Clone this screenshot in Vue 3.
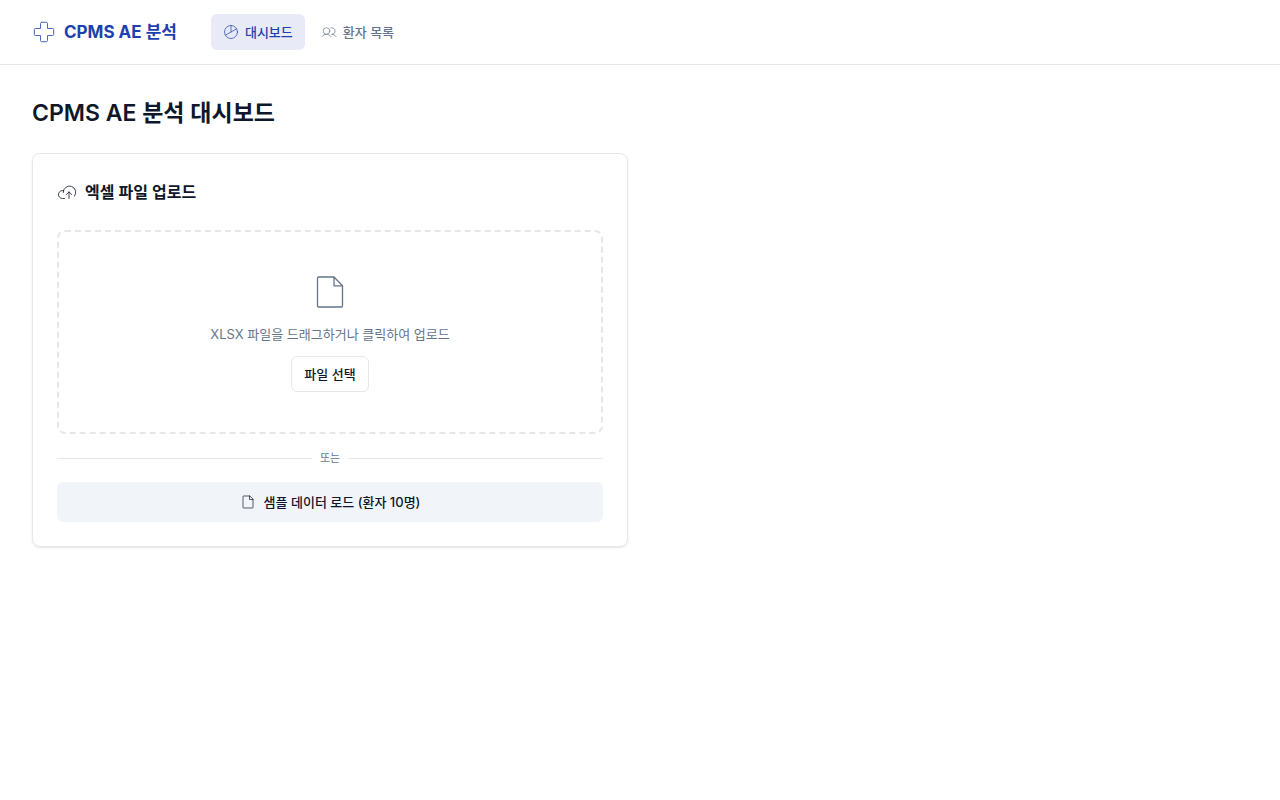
<script setup>
const nav = [
  { label: '대시보드', icon: 'chart', active: true },
  { label: '환자 목록', icon: 'users', active: false },
]
</script>

<template>
  <div class="page">
    <header class="topbar">
      <a class="brand" href="#">
        <svg class="brand-icon" viewBox="0 0 24 24" aria-hidden="true">
          <path d="M9.700 2.300h4.600a1.200 1.200 0 0 1 1.200 1.200v5h5a1.200 1.200 0 0 1 1.200 1.200v4.600a1.200 1.200 0 0 1-1.200 1.200h-5v5a1.200 1.200 0 0 1-1.200 1.200H9.700a1.200 1.200 0 0 1-1.200-1.200v-5h-5a1.200 1.200 0 0 1-1.200-1.200V9.700a1.200 1.200 0 0 1 1.200-1.200h5v-5a1.200 1.200 0 0 1 1.200-1.200z" />
        </svg>
        <span>CPMS AE 분석</span>
      </a>
      <nav class="nav">
        <a v-for="item in nav" :key="item.label" href="#" class="nav-link" :class="{ active: item.active }">
          <svg v-if="item.icon === 'chart'" class="icon-small" viewBox="0 0 16 16" aria-hidden="true">
            <circle cx="8" cy="8" r="6.500" />
            <path d="M8 1.500V8M2.400 11.200l11.200-6.400" />
          </svg>
          <svg v-else class="icon-small" viewBox="0 0 16 16" aria-hidden="true">
            <circle cx="5.500" cy="7" r="3.300" />
            <path d="M1 12.600c1-1.500 2.600-2.300 4.500-2.300S9 11.100 10 12.600M9.700 3.900a3.300 3.300 0 1 1 .8 6.400c1.900 0 3.500.8 4.500 2.300" />
          </svg>
          <span>{{ item.label }}</span>
        </a>
      </nav>
    </header>

    <main class="content">
      <h1>CPMS AE 분석 대시보드</h1>
      <div class="grid">
        <section class="card">
          <h2>
            <svg class="icon-cloud" viewBox="0 0 20 20" aria-hidden="true">
              <path d="M7.500 16.500H5.500a4 4 0 1 1 1.200-7.800M6.200 10.500a6.300 6.300 0 1 1 11.300 3.700M9.300 12.600l2.700-2.700 2.700 2.700M12 9.900v6.600" />
            </svg>
            <span>엑셀 파일 업로드</span>
          </h2>
          <div class="dropzone">
            <svg class="icon-file" viewBox="0 0 40 40" aria-hidden="true">
              <path d="M24 5H8.700c-.7 0-1.200.5-1.200 1.200v27.600c0 .7.500 1.200 1.200 1.200h22.600c.7 0 1.200-.5 1.200-1.200V13.800zM24 5v8.800h8.500" />
            </svg>
            <p>XLSX 파일을 드래그하거나 클릭하여 업로드</p>
            <button type="button" class="pick">파일 선택</button>
          </div>
          <div class="divider"><span>또는</span></div>
          <button type="button" class="sample">
            <svg class="icon-small" viewBox="0 0 16 16" aria-hidden="true">
              <path d="M9.500 2H3.500a.5.500 0 0 0-.5.500v11a.5.500 0 0 0 .5.500h9a.5.500 0 0 0 .5-.5v-8zM9.500 2v3.500H13" />
            </svg>
            <span>샘플 데이터 로드 (환자 10명)</span>
          </button>
        </section>
      </div>
    </main>
  </div>
</template>

<style>
body {
  margin: 0;
  background: #fff;
}
</style>

<style scoped>
.page {
  font-family: Inter, "Noto Sans CJK KR", sans-serif;
  font-size: 13px;
  line-height: 20px;
  color: #0f172a;
}
svg {
  flex: none;
  fill: none;
  stroke: currentColor;
  stroke-linecap: round;
  stroke-linejoin: round;
}
.topbar {
  display: flex;
  align-items: center;
  gap: 34px;
  height: 64px;
  padding: 0 32px;
  border-bottom: 1px solid #e5e7eb;
}
.brand {
  display: flex;
  align-items: center;
  gap: 8px;
  font-size: 17px;
  line-height: 28px;
  font-weight: 700;
  color: #1e40af;
  text-decoration: none;
}
.brand-icon {
  width: 24px;
  height: 24px;
  stroke-width: 1;
  opacity: 0.8;
}
.nav {
  display: flex;
  gap: 4px;
}
.nav-link {
  display: flex;
  align-items: center;
  gap: 6px;
  height: 36px;
  padding: 0 12px;
  border-radius: 6px;
  font-weight: 500;
  color: #64748b;
  text-decoration: none;
}
.nav-link.active {
  background: #e8ebf7;
  color: #1e40af;
}
.icon-small {
  width: 16px;
  height: 16px;
  stroke-width: 0.7;
}
.content {
  padding: 32px;
}
h1 {
  margin: 0 0 24px;
  font-size: 23px;
  line-height: 32px;
  font-weight: 600;
}
.grid {
  display: grid;
  grid-template-columns: 1fr 1fr;
  gap: 24px;
}
.card {
  padding: 24px;
  border: 1px solid #e5e7eb;
  border-radius: 8px;
  box-shadow: 0 1px 2px rgba(0, 0, 0, 0.1);
}
h2 {
  display: flex;
  align-items: center;
  gap: 8px;
  margin: 0 0 24px;
  font-size: 16px;
  line-height: 28px;
  font-weight: 600;
}
.icon-cloud {
  width: 20px;
  height: 20px;
  stroke-width: 0.8;
}
.dropzone {
  display: flex;
  flex-direction: column;
  align-items: center;
  gap: 12px;
  padding: 40px;
  border: 2px dashed #e5e7eb;
  border-radius: 8px;
  color: #64748b;
}
.icon-file {
  width: 40px;
  height: 40px;
  stroke-width: 1.3;
}
p {
  margin: 0;
}
button {
  font: inherit;
  font-weight: 500;
  color: #0f172a;
  border-radius: 6px;
}
.pick {
  height: 36px;
  padding: 0 12px;
  border: 1px solid #e5e7eb;
  background: #fff;
}
.divider {
  display: flex;
  align-items: center;
  gap: 8px;
  margin: 16px 0;
  font-size: 11px;
  line-height: 16px;
  color: #64748b;
}
.divider::before,
.divider::after {
  content: "";
  flex: 1;
  height: 1px;
  background: #e5e7eb;
}
.sample {
  display: flex;
  align-items: center;
  justify-content: center;
  gap: 8px;
  width: 100%;
  height: 40px;
  padding: 0 16px;
  border: 0;
  background: #f1f5f9;
}
</style>
